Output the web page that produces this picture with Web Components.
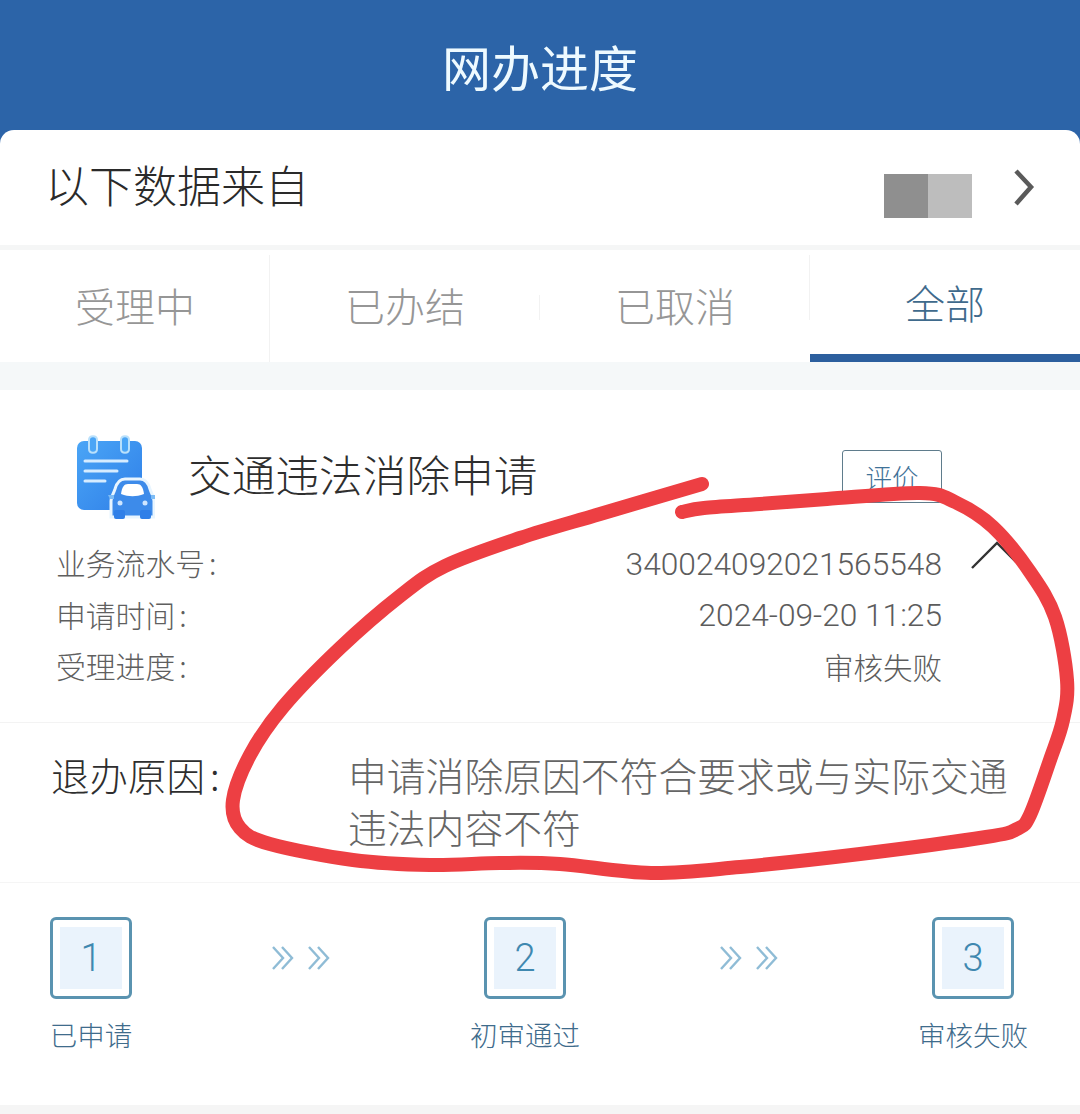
<!DOCTYPE html>
<html lang="zh">
<head>
<meta charset="utf-8">
<title>网办进度</title>
<style>
  html, body { margin: 0; padding: 0; background: #fff; }
  body { width: 1080px; height: 1114px; overflow: hidden; position: relative;
    font-family: "Noto Sans CJK SC", "Noto Sans", sans-serif; }
</style>
</head>
<body>
<app-header>网办进度</app-header>
<source-row>以下数据来自</source-row>
<tab-bar>
  <tab-item style="--sep-top:5px;--sep-bottom:0px">受理中</tab-item>
  <tab-item style="--sep-top:45px;--sep-bottom:42px">已办结</tab-item>
  <tab-item style="--sep-top:5px;--sep-bottom:42px">已取消</tab-item>
  <tab-item active>全部</tab-item>
</tab-bar>
<progress-card name="交通违法消除申请">
  <info-row label="业务流水号" value="340024092021565548"></info-row>
  <info-row label="申请时间" value="2024-09-20 11:25"></info-row>
  <info-row label="受理进度" value="审核失败"></info-row>
  <reason-block slot="reason" label="退办原因">申请消除原因不符合要求或与实际交通违法内容不符</reason-block>
  <step-track slot="steps">
    <step-item num="1" style="width:82px">已申请</step-item>
    <step-arrow></step-arrow>
    <step-item num="2">初审通过</step-item>
    <step-arrow></step-arrow>
    <step-item num="3">审核失败</step-item>
  </step-track>
</progress-card>
<ink-circle></ink-circle>

<script>
// small helper, every element just sets its shadow html once
class Base extends HTMLElement {
  constructor(){
    super();
    this.attachShadow({mode:'open'});
  }
}

class AppHeader extends Base {
  connectedCallback(){
    this.shadowRoot.innerHTML = `
      <style>
        :host{display:flex; justify-content:center; align-items:center; height:130px; box-sizing:border-box;
          background:#2c64a8; color:#eefaff; font-size:49px; line-height:1}
      </style>
      <slot></slot>`;
  }
}
customElements.define('app-header', AppHeader);

class SourceRow extends Base {
  connectedCallback(){
    this.shadowRoot.innerHTML = `
      <style>
        :host{display:block; background:#2c64a8}
        .row{display:flex; align-items:center; height:115px; padding:0 44px 0 45px; background:#fff;
          border-radius:14px 14px 0 0; color:#2a2a2a; font-size:44px; font-weight:300; line-height:1}
        .name{flex:1; margin-bottom:7px}
        .mask{display:flex; width:88px; height:44px; margin-top:16px}
        .mask i{flex:1; background:#8f8f8f}
        .mask i + i{background:#bdbdbd}
        svg{width:24px; height:40px; margin-left:40px; margin-top:1px}
        .gap{height:5px; background:#f5f6f6}
      </style>
      <div class="row">
        <span class="name"><slot></slot></span>
        <span class="mask"><i></i><i></i></span>
        <svg viewBox="0 0 24 40"><path d="M4 3 L19 19 L4 36" fill="none" stroke="#5a5a5a" stroke-width="4.5"/></svg>
      </div>
      <div class="gap"></div>`;
  }
}
customElements.define('source-row', SourceRow);

class TabBar extends Base {
  connectedCallback(){
    this.shadowRoot.innerHTML = `
      <style>
        :host{display:grid; grid-template-columns:repeat(4,270px); height:112px; background:#fff; border-bottom:28px solid #f5f8f9}
      </style>
      <slot></slot>`;
  }
}
customElements.define('tab-bar', TabBar);

class TabItem extends Base {
  connectedCallback(){
    const active = this.hasAttribute('active');
    this.shadowRoot.innerHTML = `
      <style>
        :host{position:relative; display:flex; justify-content:center; align-items:center; box-sizing:border-box; height:112px;
          padding-bottom:${active ? '0' : '3px'};
          font-size:40px; font-weight:300; line-height:1; color:${active ? '#3f6a8c' : '#969696'};
          border-bottom:${active ? '8px solid #2c5f9e' : '0'}}
        :host(:not([active]))::after{content:""; position:absolute; right:0; width:1px;
          top:var(--sep-top); bottom:var(--sep-bottom); background:#f2f2f2}
      </style>
      <slot></slot>`;
  }
}
customElements.define('tab-item', TabItem);

class ProgressCard extends Base {
  connectedCallback(){
    this.shadowRoot.innerHTML = `
      <style>
        :host{display:block; height:715px; background:#fff; border-bottom:9px solid #f5f5f5}
        .head{display:flex; align-items:center; height:147.5px; box-sizing:border-box; padding:24px 138px 0 75px}
        .head svg{width:80px; height:84px; flex:none; margin-top:2px}
        h2{flex:1; margin:0 0 3px 33px; font-weight:300; font-size:43.7px; line-height:1; color:#2e2e2e}
        button{all:unset; box-sizing:border-box; width:100px; height:53px; margin-top:2px; border:1px solid #5f7c8c; border-radius:3px;
          text-align:center; font-size:26.5px; font-weight:300; line-height:52px; color:#3f7298}
        .rows{padding:0 138px 29.5px 56px; border-bottom:1px solid #f3f3f3}
        .fold{position:absolute; left:970px; top:538px; width:48px; height:34px}
      </style>
      <div class="head">
        <svg viewBox="0 0 80 84">
          <defs><linearGradient id="g" x1="0" y1="0" x2="1" y2="1"><stop offset="0" stop-color="#4aa5f6"/><stop offset="1" stop-color="#2f7fe8"/></linearGradient></defs>
          <rect x="2" y="6" width="65" height="69" rx="7" fill="url(#g)"/>
          <path d="M14 5 C14 0 22 0 22 5 V14 C22 19 14 19 14 14 Z M46 5 C46 0 54 0 54 5 V14 C54 19 46 19 46 14 Z" fill="#4aa5f6" stroke="#b9e0fb" stroke-width="2"/>
          <path d="M10 26 H52 M10 36 H42 M10 46 H30" stroke="#d6ecff" stroke-width="3" stroke-linecap="round"/>
          <path d="M36 82 V66 C36 62 38 60 40 54 C42 47 45 44 50 44 H65 C70 44 73 47 75 54 C77 60 79 62 79 66 V82 Z" fill="#3d8bea" stroke="#e8f5ff" stroke-width="3"/>
          <path d="M46 59 C47 52 49 49 53 49 H62 C66 49 68 52 69 59 C61 62 54 62 46 59 Z" fill="#fff"/>
          <path d="M33 60 H39 V64 H35 Z M82 60 H76 V64 H80 Z" fill="#7dbcf5"/>
          <rect x="39" y="75" width="11" height="9" rx="2" fill="#2f7fe8"/><rect x="65" y="75" width="11" height="9" rx="2" fill="#2f7fe8"/>
          <circle cx="45" cy="68" r="2.5" fill="#cfe6ff"/><circle cx="70" cy="68" r="2.5" fill="#cfe6ff"/>
        </svg>
        <h2>${this.getAttribute('name')}</h2>
        <button>评价</button>
      </div>
      <div class="rows">
        <slot></slot>
      </div>
      <svg class="fold" viewBox="0 0 48 34"><path d="M2 30 L27 5 L46 24" fill="none" stroke="#333" stroke-width="2.4"/></svg>
      <slot name="reason"></slot>
      <slot name="steps"></slot>`;
  }
}
customElements.define('progress-card', ProgressCard);

class InfoRow extends Base {
  connectedCallback(){
    const value = this.getAttribute('value');
    this.shadowRoot.innerHTML = `
      <style>
        :host{display:flex; justify-content:space-between; align-items:center; height:51.5px;
          font-size:29.8px; font-weight:300; color:#5f5f5f; line-height:1}
        .c{margin-left:4px}
        .v{font-family:Roboto,"Noto Sans CJK SC",sans-serif; font-size:31.7px; color:#5c5c5c; margin-top:3px}
        .v.cjk{font-family:"Noto Sans CJK SC",sans-serif; font-size:29.5px; margin-top:0}
      </style>
      <span>${this.getAttribute('label')}<span class="c">:</span></span>
      <span class="v ${/[\u4e00-\u9fff]/.test(value) ? 'cjk' : ''}">${value}</span>`;
  }
}
customElements.define('info-row', InfoRow);

class ReasonBlock extends Base {
  connectedCallback(){
    this.shadowRoot.innerHTML = `
      <style>
        :host{display:flex; height:160px; box-sizing:border-box; padding:25px 70px 0 51px; border-bottom:1px solid #f5f5f5;
          font-size:38.8px; font-weight:300; line-height:52px}
        .l{width:297px; flex:none; color:#2e2e2e; font-size:38.5px}
        .c{margin-left:5px}
        .t{color:#666}
      </style>
      <span class="l">${this.getAttribute('label')}<span class="c">:</span></span>
      <span class="t"><slot></slot></span>`;
  }
}
customElements.define('reason-block', ReasonBlock);

class StepTrack extends Base {
  connectedCallback(){
    this.shadowRoot.innerHTML = `
      <style>
        :host{display:flex; justify-content:space-between; align-items:flex-start; padding:34px 52px 0 50px}
      </style>
      <slot></slot>`;
  }
}
customElements.define('step-track', StepTrack);

class StepItem extends Base {
  connectedCallback(){
    this.shadowRoot.innerHTML = `
      <style>
        :host{display:flex; flex-direction:column; align-items:center; width:110px; font-size:27.5px; font-weight:300; line-height:1; color:#3f6c8c}
        .box{box-sizing:border-box; width:82px; height:82px; padding:7px; border:3px solid #5a93b0; border-radius:6px; background:#fff}
        .num{display:flex; justify-content:center; align-items:center; height:100%; background:#eaf3fc; color:#3f88b0;
          font-family:Roboto,sans-serif; font-weight:300; font-size:38px}
        .txt{margin-top:22px; white-space:nowrap}
      </style>
      <div class="box"><div class="num">${this.getAttribute('num')}</div></div>
      <div class="txt"><slot></slot></div>`;
  }
}
customElements.define('step-item', StepItem);

class StepArrow extends Base {
  connectedCallback(){
    this.shadowRoot.innerHTML = `
      <style>
        :host{display:block; width:58px; height:26px; margin-top:28px}
        svg{display:block; width:58px; height:26px}
      </style>
      <svg viewBox="0 0 58 26" fill="none" stroke="#8fbcd6" stroke-width="2.4">
        <path d="M1 2 L11 13 L1 24 M10 2 L20 13 L10 24 M37 2 L47 13 L37 24 M46 2 L56 13 L46 24"/>
      </svg>`;
  }
}
customElements.define('step-arrow', StepArrow);

// the red pen mark drawn over the screenshot, points read off the picture
const INK = [[702,484],[600,514],[520,538],[445,566],[400,596],[340,648],[283,707],[250,755],[233,800],[240,828],
  [270,844],[353,860],[430,865],[500,863],[560,864],[651,873],[740,867],[860,854],[986,837],[1017,829],[1030,815],
  [1050,760],[1063,720],[1067,680],[1055,617],[1030,572],[993,527],[955,502],[920,493],[827,499],[760,504],[704,508],[682,512]];

function smoothPath(p){
  let d = `M${p[0][0]} ${p[0][1]}`;
  for (let i = 0; i < p.length - 1; i++) {
    const a = p[i-1] || p[i], b = p[i], c = p[i+1], e = p[i+2] || c;
    const c1 = [b[0] + (c[0]-a[0])/6, b[1] + (c[1]-a[1])/6];
    const c2 = [c[0] - (e[0]-b[0])/6, c[1] - (e[1]-b[1])/6];
    d += ` C${c1[0].toFixed(1)} ${c1[1].toFixed(1)} ${c2[0].toFixed(1)} ${c2[1].toFixed(1)} ${c[0]} ${c[1]}`;
  }
  return d;
}

class InkCircle extends Base {
  connectedCallback(){
    this.shadowRoot.innerHTML = `
      <style>
        :host{position:absolute; left:0; top:0; width:1080px; height:1114px; pointer-events:none}
        svg{display:block}
      </style>
      <svg width="1080" height="1114" viewBox="0 0 1080 1114">
        <path d="${smoothPath(INK)}" fill="none" stroke="#ed3f43" stroke-width="14" stroke-linecap="round" stroke-linejoin="round"/>
      </svg>`;
  }
}
customElements.define('ink-circle', InkCircle);
</script>
</body>
</html>
